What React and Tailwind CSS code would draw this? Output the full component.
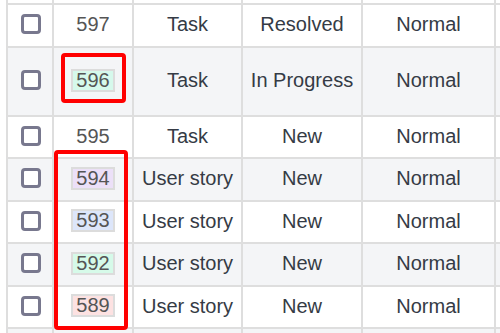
import React from 'react';

const rows = [
  { id: '597', type: 'Task', status: 'Resolved', priority: 'Normal', h: 'h-[43px]', bg: 'bg-white' },
  { id: '596', type: 'Task', status: 'In Progress', priority: 'Normal', h: 'h-[69px]', bg: 'bg-[#f4f5f7]', badge: 'bg-[#d6f9ec]' },
  { id: '595', type: 'Task', status: 'New', priority: 'Normal', h: 'h-[42px]', bg: 'bg-white' },
  { id: '594', type: 'User story', status: 'New', priority: 'Normal', h: 'h-[43px]', bg: 'bg-[#f4f5f7]', badge: 'bg-[#ece0f8]' },
  { id: '593', type: 'User story', status: 'New', priority: 'Normal', h: 'h-[42px]', bg: 'bg-white', badge: 'bg-[#dde6fa]' },
  { id: '592', type: 'User story', status: 'New', priority: 'Normal', h: 'h-[43px]', bg: 'bg-[#f4f5f7]', badge: 'bg-[#d6fae9]' },
  { id: '589', type: 'User story', status: 'New', priority: 'Normal', h: 'h-[42px]', bg: 'bg-white', badge: 'bg-[#fde2e2]' },
];

const cell = 'flex items-center justify-center border-r-2 border-[#dedede] shrink-0 h-full pb-[3px]';

const Row = ({ row }) => (
  <div className={`flex ${row.h} ${row.bg} border-b-2 border-[#dedede]`}>
    <div className={`${cell} w-[48px] border-l-2 pl-[2px]`}>
      <span className="block w-[20px] h-[20px] rounded-[4px] border-[3px] border-[#78788e] bg-white" />
    </div>
    <div className={`${cell} w-[80px]`}>
      {row.badge ? (
        <span className={`${row.badge} border-2 border-[#dcdcdc] px-[3px] leading-[19px] text-[#555]`}>{row.id}</span>
      ) : (
        <span className="text-[#555]">{row.id}</span>
      )}
    </div>
    <div className={`${cell} w-[109px]`}>{row.type}</div>
    <div className={`${cell} w-[120px]`}>{row.status}</div>
    <div className={`${cell} w-[133px]`}>{row.priority}</div>
    <div className={`${cell} w-[200px]`} />
  </div>
);

const Blank = ({ h, bg }) => (
  <div className={`flex ${h} ${bg}`}>
    <div className={`${cell} w-[48px] border-l-2`} />
    <div className={`${cell} w-[80px]`} />
    <div className={`${cell} w-[109px]`} />
    <div className={`${cell} w-[120px]`} />
    <div className={`${cell} w-[133px]`} />
    <div className={`${cell} w-[200px]`} />
  </div>
);

export default function App() {
  return (
    <div className="relative w-[500px] h-[333px] overflow-hidden bg-white pl-[6px] text-[20px] text-[#353b45]" style={{ fontFamily: '"Liberation Sans", Arial, sans-serif' }}>
      <div className="flex flex-col">
        {/* tail of the row above */}
        <div className="border-b-2 border-[#dedede]">
          <Blank h="h-[3px]" bg="bg-white" />
        </div>
        {rows.map((r) => (
          <Row key={r.id} row={r} />
        ))}
        <Blank h="h-[20px]" bg="bg-[#f4f5f7]" />
      </div>

      {/* highlight annotations */}
      <div className="absolute left-[61px] top-[53px] w-[65px] h-[50px] border-4 border-[#ff0000] rounded-[4px]" />
      <div className="absolute left-[54px] top-[150px] w-[74px] h-[180px] border-4 border-[#ff0000] rounded-[4px]" />
    </div>
  );
}
